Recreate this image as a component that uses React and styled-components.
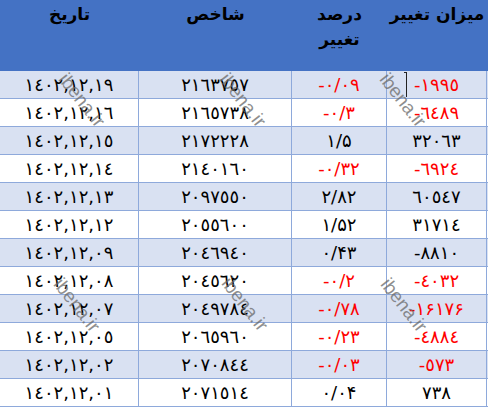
import React from "react";
import styled, { createGlobalStyle } from "styled-components";

const GlobalStyle = createGlobalStyle`
  html, body {
    margin: 0;
    padding: 0;
    background: #fff;
  }
`;

const AR = "٠١٢٣٤٥٦٧٨٩";
const FA = "۰۱۲۳۴۵۶۷۸۹";
const toAr = (s) => s.replace(/[0-9]/g, (d) => AR[+d]);
const toFa = (s) => s.replace(/[0-9]/g, (d) => FA[+d]);

const rows = [
  { date: "1402,12,19", index: "2163757", pct: "-0/09", change: "-1995", neg: true, cursor: true },
  { date: "1402,12,16", index: "2165738", pct: "-0/3", change: "-6489", neg: true },
  { date: "1402,12,15", index: "2172228", pct: "1/5", change: "32063" },
  { date: "1402,12,14", index: "2140160", pct: "-0/32", change: "-6924", neg: true },
  { date: "1402,12,13", index: "2097550", pct: "2/82", change: "60547" },
  { date: "1402,12,12", index: "2055600", pct: "1/52", change: "31714" },
  { date: "1402,12,09", index: "2046940", pct: "0/43", change: "-8810" },
  { date: "1402,12,08", index: "2045620", pct: "-0/2", change: "-4032", neg: true },
  { date: "1402,12,07", index: "2049784", pct: "-0/78", change: "-16176", neg: true, faChange: true },
  { date: "1402,12,05", index: "2065960", pct: "-0/23", change: "-4884", neg: true },
  { date: "1402,12,02", index: "2070844", pct: "-0/03", change: "-573", neg: true },
  { date: "1402,12,01", index: "2071514", pct: "0/04", change: "738" },
];

const marks = [
  { x: 82, y: 100 },
  { x: 243, y: 100 },
  { x: 403, y: 100 },
  { x: 77, y: 305 },
  { x: 245, y: 304 },
  { x: 404, y: 305 },
];

const Sheet = styled.div`
  position: relative;
  width: 488px;
  height: 409px;
  overflow: hidden;
  background: #fff;
  font-family: "DejaVu Sans", "Noto Sans", sans-serif;
`;

const Grid = styled.div`
  display: grid;
  grid-template-columns: 139px 153px 95px 100px 2px;
  grid-auto-rows: 28px;
  grid-template-rows: 71px;
  width: 489px;
`;

const HeadCell = styled.div`
  background: #4472c4;
  color: #000;
  font-weight: bold;
  font-size: 17px;
  line-height: 25px;
  text-align: center;
  padding-top: 2px;
  box-sizing: border-box;
`;

const Cell = styled.div`
  position: relative;
  box-sizing: border-box;
  background: ${(p) => (p.$shade ? "#d9e1f2" : "#ffffff")};
  border-right: 1px solid #8ea9db;
  border-bottom: 1px solid #8ea9db;
  color: ${(p) => (p.$neg ? "#ff0000" : "#000")};
  font-size: 18px;
  direction: ltr;
  display: flex;
  align-items: center;
  justify-content: center;
  white-space: nowrap;
`;

const Cursor = styled.span`
  position: absolute;
  left: 17px;
  top: 1px;
  width: 3px;
  height: 25px;
  border-top: 1px solid #222;
  border-right: 1px solid #222;
  box-sizing: border-box;
`;

const Watermark = styled.span`
  position: absolute;
  transform: translate(-50%, -50%) rotate(52deg);
  font-family: "Liberation Sans", Arial, sans-serif;
  font-size: 19px;
  line-height: 1;
  color: rgba(105, 105, 105, 0.75);
  pointer-events: none;
  white-space: nowrap;
`;

export default function App() {
  return (
    <>
      <GlobalStyle />
      <Sheet>
        <Grid>
          <HeadCell>تاریخ</HeadCell>
          <HeadCell>شاخص</HeadCell>
          <HeadCell>
            درصد
            <br />
            تغییر
          </HeadCell>
          <HeadCell>میزان تغییر</HeadCell>
          <HeadCell />
          {rows.map((r, i) => {
            const shade = i % 2 === 0;
            return (
              <React.Fragment key={r.date}>
                <Cell $shade={shade}>{toAr(r.date)}</Cell>
                <Cell $shade={shade}>{toAr(r.index)}</Cell>
                <Cell $shade={shade} $neg={r.neg}>
                  {toFa(r.pct)}
                </Cell>
                <Cell $shade={shade} $neg={r.neg}>
                  {r.cursor && <Cursor />}
                  {r.faChange ? toFa(r.change) : toAr(r.change)}
                </Cell>
                <Cell $shade={shade} />
              </React.Fragment>
            );
          })}
        </Grid>
        {marks.map((m, i) => (
          <Watermark key={i} style={{ left: m.x, top: m.y }}>
            ibena.ir
          </Watermark>
        ))}
      </Sheet>
    </>
  );
}
